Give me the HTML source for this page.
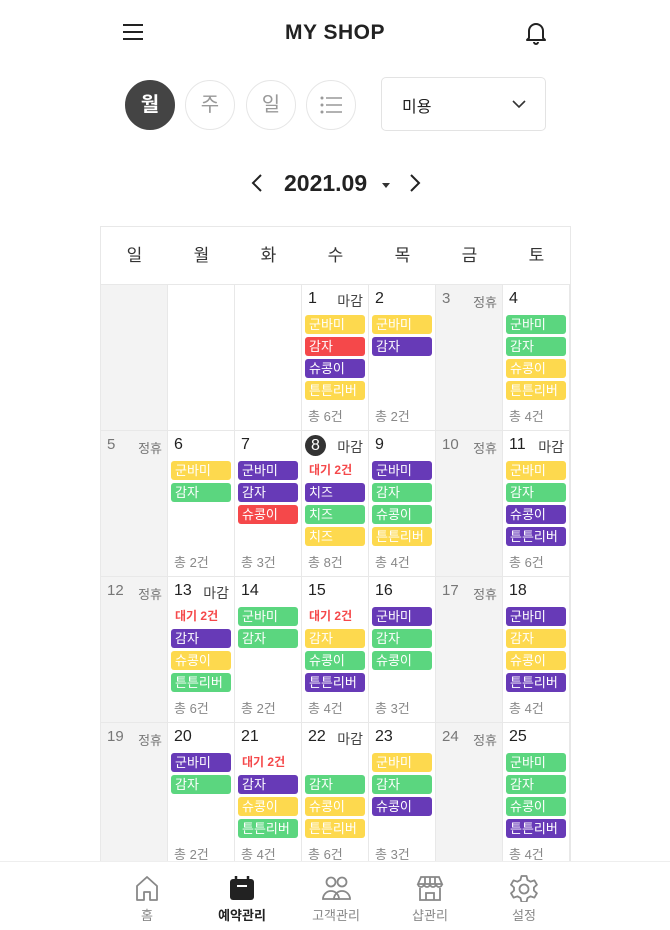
<!DOCTYPE html><html><head><meta charset="utf-8"><style>
*{margin:0;padding:0;box-sizing:border-box}
body{width:670px;height:930px;overflow:hidden;background:#fff;font-family:"Liberation Sans","Noto Sans CJK KR",sans-serif;color:#222;position:relative}
.a{position:absolute}
.circ{position:absolute;top:80px;width:50px;height:50px;border-radius:50%;border:1px solid #e6e6e6;text-align:center;line-height:48px;font-size:20px;color:#999}
.grid{position:absolute;left:100px;top:226px;width:471px;height:640px;border:1px solid #e8e8e8;overflow:hidden}
.hd{position:absolute;top:0;width:67px;height:57px;line-height:57px;text-align:center;font-size:17px;color:#333}
.c{position:absolute;width:67px;height:146px;border-right:1px solid #e8e8e8;border-top:1px solid #e8e8e8}
.g{background:#f3f3f3}
.n{position:absolute;left:6px;top:5px;font-size:16px;color:#222}
.g .n{color:#777;font-size:15px}
.m{position:absolute;right:5px;top:6px;font-size:14px;color:#444}
.g .m{color:#777;font-size:13px;top:7px}
.e{position:absolute;left:3px;right:3px;height:19px;border-radius:3px;color:#fff;font-size:13px;line-height:19px;padding-left:4px}
.s1{top:30px}.s2{top:52px}.s3{top:74px}.s4{top:96px}
.Y{background:#fdd94e}.R{background:#f5484a}.P{background:#673ab7}.G{background:#5bd67f}
.w{position:absolute;left:7px;top:30px;font-size:12px;color:#f5484a;font-weight:bold;line-height:19px}
.t{position:absolute;left:6px;top:121px;font-size:13px;color:#888}
.nav{position:absolute;left:0;top:861px;width:670px;height:69px;background:#fff;border-top:1px solid #eee}
.ni{position:absolute;top:0;width:80px;text-align:center;font-size:13px;color:#888}
.ni svg{display:block;margin:12px auto 3px}
</style></head><body>
<svg class="a" style="left:122px;top:22px" width="22" height="20"><path d="M1 3h20M1 10h20M1 17h20" stroke="#222" stroke-width="2"/></svg>
<div class="a" style="left:0;width:670px;top:21px;text-align:center;font-size:21px;font-weight:bold;letter-spacing:0.5px">MY SHOP</div>
<svg class="a" style="left:524px;top:20px" width="24" height="26"><path d="M5 18V11a7 7 0 0 1 14 0v7l2 2H3z" fill="none" stroke="#222" stroke-width="2" stroke-linejoin="round"/><path d="M10 22a2 2 0 0 0 4 0" stroke="#222" stroke-width="2" fill="none"/></svg>
<div class="circ" style="left:125px;background:#444;border-color:#444;color:#fff;font-weight:bold">월</div>
<div class="circ" style="left:185px">주</div>
<div class="circ" style="left:246px">일</div>
<div class="circ" style="left:306px"><svg width="22" height="18" style="margin-top:15px"><g fill="#999"><circle cx="2" cy="2" r="1.5"/><circle cx="2" cy="9" r="1.5"/><circle cx="2" cy="16" r="1.5"/></g><path d="M6 2h16M6 9h16M6 16h16" stroke="#999" stroke-width="1.6"/></svg></div>
<div class="a" style="left:381px;top:77px;width:165px;height:54px;border:1px solid #e3e3e3;border-radius:5px"><span class="a" style="left:20px;top:15px;font-size:16px">미용</span><svg class="a" style="left:130px;top:22px" width="14" height="9"><path d="M1 1l6 6 6-6" stroke="#333" stroke-width="1.6" fill="none"/></svg></div>
<svg class="a" style="left:250px;top:173px" width="14" height="20"><path d="M11 2L3 10l8 8" stroke="#222" stroke-width="2" fill="none"/></svg>
<div class="a" style="left:284px;top:170px;font-size:23px;font-weight:bold">2021.09</div>
<svg class="a" style="left:382px;top:183px" width="8" height="6"><path d="M0 0h8L4 5z" fill="#333"/></svg>
<svg class="a" style="left:408px;top:173px" width="14" height="20"><path d="M3 2l8 8-8 8" stroke="#222" stroke-width="2" fill="none"/></svg>
<div class="grid">
<div class="hd" style="left:0">일</div><div class="hd" style="left:67px">월</div><div class="hd" style="left:134px">화</div><div class="hd" style="left:201px">수</div><div class="hd" style="left:268px">목</div><div class="hd" style="left:335px">금</div><div class="hd" style="left:402px">토</div>
<div class="c g" style="left:0;top:57px"></div>
<div class="c" style="left:67px;top:57px"></div>
<div class="c" style="left:134px;top:57px"></div>
<div class="c" style="left:201px;top:57px"><span class="n">1</span><span class="m">마감</span><div class="e Y s1">군바미</div><div class="e R s2">감자</div><div class="e P s3">슈콩이</div><div class="e Y s4">튼튼리버</div><span class="t">총 6건</span></div>
<div class="c" style="left:268px;top:57px"><span class="n">2</span><div class="e Y s1">군바미</div><div class="e P s2">감자</div><span class="t">총 2건</span></div>
<div class="c g" style="left:335px;top:57px"><span class="n">3</span><span class="m">정휴</span></div>
<div class="c" style="left:402px;top:57px"><span class="n">4</span><div class="e G s1">군바미</div><div class="e G s2">감자</div><div class="e Y s3">슈콩이</div><div class="e Y s4">튼튼리버</div><span class="t">총 4건</span></div>
<div class="c g" style="left:0;top:203px"><span class="n">5</span><span class="m">정휴</span></div>
<div class="c" style="left:67px;top:203px"><span class="n">6</span><div class="e Y s1">군바미</div><div class="e G s2">감자</div><span class="t">총 2건</span></div>
<div class="c" style="left:134px;top:203px"><span class="n">7</span><div class="e P s1">군바미</div><div class="e P s2">감자</div><div class="e R s3">슈콩이</div><span class="t">총 3건</span></div>
<div class="c" style="left:201px;top:203px"><span class="n" style="left:3px;top:4px;width:21px;height:21px;border-radius:50%;background:#333;color:#fff;text-align:center;line-height:21px">8</span><span class="m">마감</span><span class="w">대기 2건</span><div class="e P s2">치즈</div><div class="e G s3">치즈</div><div class="e Y s4">치즈</div><span class="t">총 8건</span></div>
<div class="c" style="left:268px;top:203px"><span class="n">9</span><div class="e P s1">군바미</div><div class="e G s2">감자</div><div class="e G s3">슈콩이</div><div class="e Y s4">튼튼리버</div><span class="t">총 4건</span></div>
<div class="c g" style="left:335px;top:203px"><span class="n">10</span><span class="m">정휴</span></div>
<div class="c" style="left:402px;top:203px"><span class="n">11</span><span class="m">마감</span><div class="e Y s1">군바미</div><div class="e G s2">감자</div><div class="e P s3">슈콩이</div><div class="e P s4">튼튼리버</div><span class="t">총 6건</span></div>
<div class="c g" style="left:0;top:349px"><span class="n">12</span><span class="m">정휴</span></div>
<div class="c" style="left:67px;top:349px"><span class="n">13</span><span class="m">마감</span><span class="w">대기 2건</span><div class="e P s2">감자</div><div class="e Y s3">슈콩이</div><div class="e G s4">튼튼리버</div><span class="t">총 6건</span></div>
<div class="c" style="left:134px;top:349px"><span class="n">14</span><div class="e G s1">군바미</div><div class="e G s2">감자</div><span class="t">총 2건</span></div>
<div class="c" style="left:201px;top:349px"><span class="n">15</span><span class="w">대기 2건</span><div class="e Y s2">감자</div><div class="e G s3">슈콩이</div><div class="e P s4">튼튼리버</div><span class="t">총 4건</span></div>
<div class="c" style="left:268px;top:349px"><span class="n">16</span><div class="e P s1">군바미</div><div class="e G s2">감자</div><div class="e G s3">슈콩이</div><span class="t">총 3건</span></div>
<div class="c g" style="left:335px;top:349px"><span class="n">17</span><span class="m">정휴</span></div>
<div class="c" style="left:402px;top:349px"><span class="n">18</span><div class="e P s1">군바미</div><div class="e Y s2">감자</div><div class="e Y s3">슈콩이</div><div class="e P s4">튼튼리버</div><span class="t">총 4건</span></div>
<div class="c g" style="left:0;top:495px"><span class="n">19</span><span class="m">정휴</span></div>
<div class="c" style="left:67px;top:495px"><span class="n">20</span><div class="e P s1">군바미</div><div class="e G s2">감자</div><span class="t">총 2건</span></div>
<div class="c" style="left:134px;top:495px"><span class="n">21</span><span class="w">대기 2건</span><div class="e P s2">감자</div><div class="e Y s3">슈콩이</div><div class="e G s4">튼튼리버</div><span class="t">총 4건</span></div>
<div class="c" style="left:201px;top:495px"><span class="n">22</span><span class="m">마감</span><div class="e G s2">감자</div><div class="e Y s3">슈콩이</div><div class="e Y s4">튼튼리버</div><span class="t">총 6건</span></div>
<div class="c" style="left:268px;top:495px"><span class="n">23</span><div class="e Y s1">군바미</div><div class="e G s2">감자</div><div class="e P s3">슈콩이</div><span class="t">총 3건</span></div>
<div class="c g" style="left:335px;top:495px"><span class="n">24</span><span class="m">정휴</span></div>
<div class="c" style="left:402px;top:495px"><span class="n">25</span><div class="e G s1">군바미</div><div class="e G s2">감자</div><div class="e G s3">슈콩이</div><div class="e P s4">튼튼리버</div><span class="t">총 4건</span></div>
</div>
<div class="nav">
<div class="ni" style="left:107px"><svg width="28" height="28"><path d="M4 26V12L14 3l10 9v14h-7v-8h-6v8z" fill="none" stroke="#888" stroke-width="1.8" stroke-linejoin="round"/></svg>홈</div>
<div class="ni" style="left:202px;color:#222;font-weight:bold"><svg width="28" height="28"><rect x="2" y="5" width="24" height="21" rx="3" fill="#222"/><path d="M8 2v5M20 2v5" stroke="#222" stroke-width="2.5"/><path d="M9 12h10" stroke="#fff" stroke-width="2"/></svg>예약관리</div>
<div class="ni" style="left:296px"><svg width="30" height="28"><g fill="none" stroke="#888" stroke-width="1.8"><circle cx="10" cy="8" r="4.5"/><circle cx="21" cy="8" r="4.5"/><path d="M2 25a8 8 0 0 1 16 0z"/><path d="M13 25a8 8 0 0 1 16 0z"/></g></svg>고객관리</div>
<div class="ni" style="left:390px"><svg width="28" height="28"><g fill="none" stroke="#888" stroke-width="1.8"><path d="M5 3h18l3 7H2z"/><path d="M2 10a3 3 0 0 0 6 0a3 3 0 0 0 6 0a3 3 0 0 0 6 0a3 3 0 0 0 6 0M9 3v7M14 3v7M19 3v7"/><path d="M4 14v12h20V14M10 26v-7h8v7"/></g></svg>샵관리</div>
<div class="ni" style="left:484px"><svg width="28" height="28"><g fill="none" stroke="#888" stroke-width="1.8"><path d="M11.5 2h5l1 4 3 1.7 3.9-1.3 2.5 4.3-3 2.8v3l3 2.8-2.5 4.3-3.9-1.3-3 1.7-1 4h-5l-1-4-3-1.7-3.9 1.3L1 19.3l3-2.8v-3L1 10.7l2.5-4.3 3.9 1.3 3-1.7z" stroke-linejoin="round"/><circle cx="14" cy="15" r="4.5"/></g></svg>설정</div>
</div>
</body></html>
